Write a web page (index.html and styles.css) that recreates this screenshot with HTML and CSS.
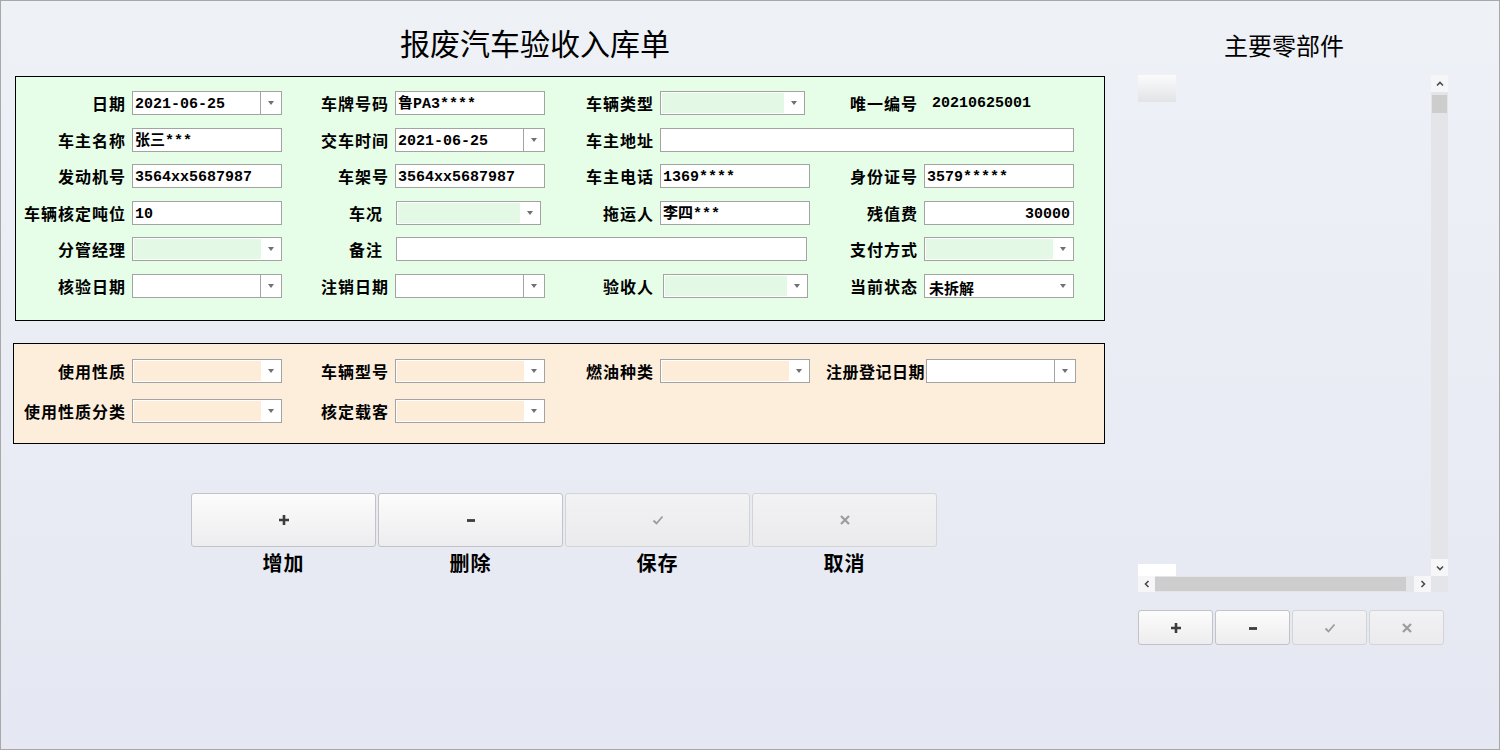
FILE: index.html
```html
<!DOCTYPE html>
<html lang="zh-CN">
<head>
  <meta charset="UTF-8">
  <title>报废汽车验收入库单</title>
  <link rel="stylesheet" href="styles.css">
</head>
<body>
  <div class="window">
    <div class="main">
      <h1 class="title">报废汽车验收入库单</h1>

      <!-- basic info -->
      <div class="panel panel-base">
        <div class="form-grid">
          <span class="lbl">日期</span>
          <div class="field date"><span class="val">2021-06-25</span><i class="drop"></i></div>
          <span class="lbl">车牌号码</span>
          <div class="field"><span class="val">鲁PA3****</span></div>
          <span class="lbl">车辆类型</span>
          <div class="field combo w145"><span class="fill"></span><i class="drop"></i></div>
          <span class="lbl">唯一编号</span>
          <span class="plain">20210625001</span>

          <span class="lbl">车主名称</span>
          <div class="field"><span class="val">张三***</span></div>
          <span class="lbl">交车时间</span>
          <div class="field date"><span class="val">2021-06-25</span><i class="drop"></i></div>
          <span class="lbl">车主地址</span>
          <div class="field span3"></div>

          <span class="lbl">发动机号</span>
          <div class="field"><span class="val">3564xx5687987</span></div>
          <span class="lbl">车架号</span>
          <div class="field"><span class="val">3564xx5687987</span></div>
          <span class="lbl">车主电话</span>
          <div class="field"><span class="val">1369****</span></div>
          <span class="lbl">身份证号</span>
          <div class="field"><span class="val">3579*****</span></div>

          <span class="lbl">车辆核定吨位</span>
          <div class="field"><span class="val">10</span></div>
          <span class="lbl wide">车况</span>
          <div class="field combo w145 shift1"><span class="fill"></span><i class="drop"></i></div>
          <span class="lbl">拖运人</span>
          <div class="field"><span class="val">李四***</span></div>
          <span class="lbl">残值费</span>
          <div class="field"><span class="val right">30000</span></div>

          <span class="lbl">分管经理</span>
          <div class="field combo"><span class="fill"></span><i class="drop"></i></div>
          <span class="lbl wide">备注</span>
          <div class="field span3 memo"></div>
          <span class="lbl">支付方式</span>
          <div class="field combo"><span class="fill"></span><i class="drop"></i></div>

          <span class="lbl">核验日期</span>
          <div class="field date"><span class="val"></span><i class="drop"></i></div>
          <span class="lbl">注销日期</span>
          <div class="field date"><span class="val"></span><i class="drop"></i></div>
          <span class="lbl">验收人</span>
          <div class="field combo w145 shift3"><span class="fill"></span><i class="drop"></i></div>
          <span class="lbl">当前状态</span>
          <div class="field combo"><span class="val cn">未拆解</span><i class="drop"></i></div>
        </div>
      </div>

      <!-- vehicle registration -->
      <div class="panel panel-extra">
        <div class="form-grid">
          <span class="lbl">使用性质</span>
          <div class="field combo"><span class="fill"></span><i class="drop"></i></div>
          <span class="lbl">车辆型号</span>
          <div class="field combo"><span class="fill"></span><i class="drop"></i></div>
          <span class="lbl">燃油种类</span>
          <div class="field combo"><span class="fill"></span><i class="drop"></i></div>
          <span class="lbl tight">注册登记日期</span>
          <div class="field date"><span class="val"></span><i class="drop"></i></div>

          <span class="lbl">使用性质分类</span>
          <div class="field combo"><span class="fill"></span><i class="drop"></i></div>
          <span class="lbl">核定载客</span>
          <div class="field combo"><span class="fill"></span><i class="drop"></i></div>
        </div>
      </div>

      <div class="actions">
        <div class="action">
          <button class="btn big"><svg width="12" height="12" viewBox="0 0 12 12"><path d="M6 1v10M1 6h10" stroke="currentColor" stroke-width="2.6"/></svg></button>
          <span class="action-label">增加</span>
        </div>
        <div class="action">
          <button class="btn big"><svg width="10" height="12" viewBox="0 0 10 12"><path d="M1 6.5h8" stroke="currentColor" stroke-width="2.8"/></svg></button>
          <span class="action-label">删除</span>
        </div>
        <div class="action">
          <button class="btn big off"><svg width="12" height="12" viewBox="0 0 12 12"><path d="M1.5 6.5l3 3 6-7" stroke="currentColor" stroke-width="1.8" fill="none"/></svg></button>
          <span class="action-label">保存</span>
        </div>
        <div class="action">
          <button class="btn big off"><svg width="12" height="12" viewBox="0 0 12 12"><path d="M2 2l8 8M10 2l-8 8" stroke="currentColor" stroke-width="2.2"/></svg></button>
          <span class="action-label">取消</span>
        </div>
      </div>
    </div>

    <div class="side">
      <h2 class="side-title">主要零部件</h2>

      <div class="parts-grid">
        <div class="parts-rows">
          <div class="head-cell"></div>
          <div class="row-stub"></div>
        </div>
        <div class="vscroll">
          <span class="sb-btn"><svg width="8" height="6" viewBox="0 0 8 6"><path d="M1 4.5l3-3 3 3" stroke="#4a4a4a" stroke-width="1.6" fill="none"/></svg></span>
          <span class="vthumb"></span>
          <span class="sb-gap"></span>
          <span class="sb-btn"><svg width="8" height="6" viewBox="0 0 8 6"><path d="M1 1.5l3 3 3-3" stroke="#4a4a4a" stroke-width="1.6" fill="none"/></svg></span>
        </div>
        <div class="hscroll">
          <span class="sb-btn"><svg width="6" height="8" viewBox="0 0 6 8"><path d="M4.5 1l-3 3 3 3" stroke="#4a4a4a" stroke-width="1.6" fill="none"/></svg></span>
          <span class="hthumb"></span>
          <span class="sb-gap"></span>
          <span class="sb-btn"><svg width="6" height="8" viewBox="0 0 6 8"><path d="M1.5 1l3 3-3 3" stroke="#4a4a4a" stroke-width="1.6" fill="none"/></svg></span>
        </div>
        <div class="corner"></div>
      </div>

      <div class="mini-actions">
        <button class="btn small"><svg width="12" height="12" viewBox="0 0 12 12"><path d="M6 1v10M1 6h10" stroke="currentColor" stroke-width="2.6"/></svg></button>
        <button class="btn small"><svg width="10" height="12" viewBox="0 0 10 12"><path d="M1 6.5h8" stroke="currentColor" stroke-width="2.8"/></svg></button>
        <button class="btn small off"><svg width="12" height="12" viewBox="0 0 12 12"><path d="M1.5 6.5l3 3 6-7" stroke="currentColor" stroke-width="1.8" fill="none"/></svg></button>
        <button class="btn small off"><svg width="12" height="12" viewBox="0 0 12 12"><path d="M2 2l8 8M10 2l-8 8" stroke="currentColor" stroke-width="2.2"/></svg></button>
      </div>
    </div>
  </div>
</body>
</html>
```

FILE: styles.css
```css
* {
  box-sizing: border-box;
}

html, body {
  margin: 0;
}

body {
  font-family: "Noto Sans CJK SC", sans-serif;
  color: #000;
}

.window {
  width: 1500px;
  height: 750px;
  border: 1px solid #a8a8a8;
  background: linear-gradient(#eef1f6, #e5e8f2);
  display: flex;
  overflow: hidden;
}

.main {
  width: 1137px;
}

.title {
  margin: 0 0 14px;
  padding: 21px 0 0 399px;
  font-size: 30px;
  line-height: 40px;
  font-weight: 400;
}

/* form panels */
.panel {
  border: 1px solid #000;
}

.panel-base {
  margin-left: 14px;
  width: 1090px;
  height: 245px;
  padding-top: 14px;
  background: #e6fde8;
}

.panel-extra {
  margin: 22px 0 0 12px;
  width: 1092px;
  height: 101px;
  padding-top: 15px;
  background: #fdeedb;
}

.form-grid {
  display: grid;
  grid-template-columns: 116px 150px 113px 150px 115px 150px 114px 150px;
  grid-auto-rows: 24px;
  row-gap: 12.5px;
  align-items: center;
}

.panel-extra .form-grid {
  grid-template-columns: 118px 150px 113px 150px 115px 150px 116px 150px;
  row-gap: 16px;
}

.lbl {
  text-align: right;
  padding-right: 6px;
  font-size: 16px;
  font-weight: 700;
  letter-spacing: 1px;
  line-height: 24px;
  white-space: nowrap;
}

.lbl.wide {
  padding-right: 12px;
}

.lbl.tight {
  padding-right: 1px;
  letter-spacing: 0.5px;
}

.plain {
  padding-left: 8px;
  font-family: "Liberation Mono", monospace;
  font-size: 15px;
  font-weight: 700;
}

.field {
  height: 24px;
  border: 1px solid #a3a3a3;
  background: #fff;
  display: flex;
  align-items: stretch;
}

.field.span3 {
  grid-column: span 3;
}

.field.memo {
  width: 411px;
  margin-left: 1px;
}

.field.w145 {
  width: 145px;
}

.field.shift1 {
  margin-left: 1px;
}

.field.shift3 {
  margin-left: 3px;
}

.val {
  flex: 1;
  padding: 3px 0 0 2px;
  font-family: "Liberation Mono", "Noto Sans CJK SC", monospace;
  font-size: 15px;
  font-weight: 700;
  line-height: 19px;
  white-space: nowrap;
  overflow: hidden;
}

.val.right {
  text-align: right;
  padding-right: 3px;
}

.val.cn {
  padding-left: 4px;
  font-family: "Noto Sans CJK SC", sans-serif;
}

.drop {
  width: 20px;
  display: flex;
  align-items: center;
  justify-content: center;
}

.drop::before {
  content: "";
  border-left: 3.5px solid transparent;
  border-right: 3.5px solid transparent;
  border-top: 4px solid #707070;
}

.date .drop {
  width: 21px;
  border-left: 1px solid #a3a3a3;
}

.combo .fill {
  flex: 1;
  margin: 1px 0 1px 1px;
}

.panel-base .combo .fill {
  background: #e3f9e6;
}

.panel-extra .combo .fill {
  background: #fcecd8;
}

/* buttons */
.btn {
  display: flex;
  align-items: center;
  justify-content: center;
  padding: 0;
  border: 1px solid #c2c3c6;
  border-radius: 3px;
  background: linear-gradient(#fcfcfc, #ededef);
  color: #3d3d3d;
}

.btn.off {
  border-color: #d3d4d7;
  background: linear-gradient(#f2f2f4, #ebebed);
  color: #9c9c9c;
}

.actions {
  display: flex;
  gap: 2px;
  margin: 49px 0 0 190px;
}

.action {
  display: flex;
  flex-direction: column;
  align-items: center;
}

.btn.big {
  width: 185px;
  height: 54px;
}

.action-label {
  margin-top: 4px;
  font-size: 20px;
  font-weight: 700;
  letter-spacing: 1px;
  line-height: 24px;
}

/* parts list */
.side {
  width: 310px;
}

.side-title {
  margin: 0 0 14px;
  padding: 28px 18px 0 0;
  text-align: center;
  font-size: 24px;
  line-height: 32px;
  font-weight: 400;
}

.parts-grid {
  height: 517px;
  display: grid;
  grid-template-columns: 1fr 17px;
  grid-template-rows: 1fr 16px;
}

.parts-rows {
  display: flex;
  flex-direction: column;
  justify-content: space-between;
}

.head-cell {
  width: 38px;
  height: 27px;
  background: linear-gradient(#fbfbfc, #e2e3e6);
}

.row-stub {
  width: 38px;
  height: 12px;
  background: #fff;
}

.vscroll,
.hscroll {
  display: flex;
  background: #e4e5e9;
}

.vscroll {
  flex-direction: column;
}

.sb-btn {
  flex: none;
  width: 17px;
  height: 17px;
  display: flex;
  align-items: center;
  justify-content: center;
  background: #f6f6f8;
}

.hscroll .sb-btn {
  height: 16px;
}

.vthumb {
  flex: none;
  height: 18px;
  margin: 3px 1px 0;
  background: #cdcdcd;
}

.hthumb {
  flex: none;
  width: 251px;
  margin: 1px 0;
  background: #cdcdcd;
}

.sb-gap {
  flex: 1;
}

.corner {
  background: #e4e5e9;
}

.mini-actions {
  display: flex;
  gap: 2px;
  margin-top: 18px;
}

.btn.small {
  width: 75px;
  height: 35px;
}
```
